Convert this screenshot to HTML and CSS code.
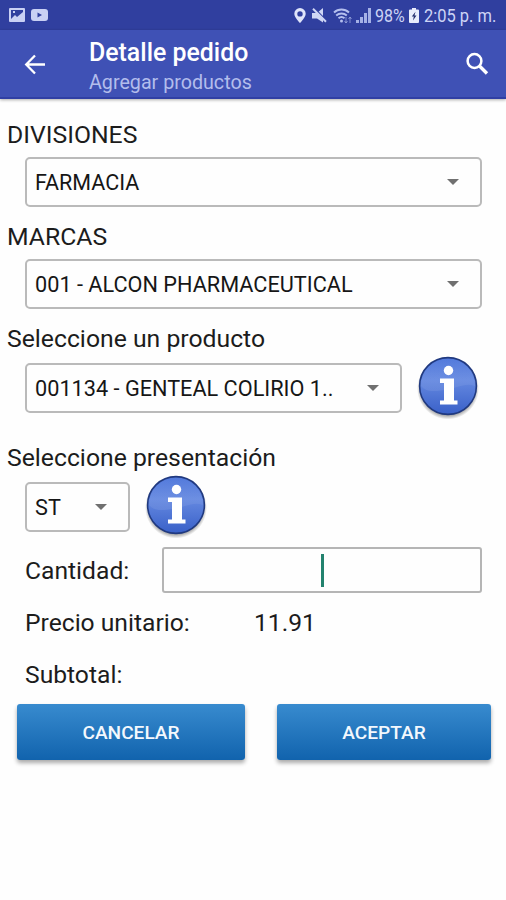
FILE: index.html
```html
<!DOCTYPE html>
<html lang="es">
<head>
<meta charset="utf-8">
<title>Detalle pedido</title>
<link rel="stylesheet" href="styles.css">
</head>
<body>
<svg class="defs" width="0" height="0" aria-hidden="true">
  <defs>
    <linearGradient id="ball" x1="0" y1="0" x2="0" y2="1">
      <stop offset="0" stop-color="#4f77db"/>
      <stop offset=".4" stop-color="#6488e0"/>
      <stop offset="1" stop-color="#3960c8"/>
    </linearGradient>
    <linearGradient id="gloss" x1="0" y1="0" x2="0" y2="1">
      <stop offset="0" stop-color="#fff" stop-opacity=".02"/>
      <stop offset="1" stop-color="#fff" stop-opacity=".08"/>
    </linearGradient>
    <radialGradient id="shade">
      <stop offset=".8" stop-color="#000" stop-opacity=".5"/>
      <stop offset="1" stop-color="#000" stop-opacity="0"/>
    </radialGradient>
    <symbol id="info" viewBox="0 0 64 64">
      <circle cx="32" cy="33.500" r="31" fill="url(#shade)"/>
      <circle cx="32" cy="31" r="28.400" fill="url(#ball)" stroke="#20397f" stroke-width="1.600"/>
      <path d="M5 31a27 27 0 0 1 54 0C49 27 39 34 29 35S11 38 5 31z" fill="url(#gloss)"/>
      <circle cx="32.500" cy="15.500" r="4.700" fill="#fff"/>
      <path d="M24 23.500H38V45.500h3.500V49.500H24v-4h4V28h-4z" fill="#fff"/>
    </symbol>
  </defs>
</svg>
<header>
  <div class="status">
    <svg width="16" height="14" viewBox="0 0 16 14"><path fill="#c9d0f4" fill-rule="evenodd" d="M1 0h14a1 1 0 0 1 1 1v12a1 1 0 0 1-1 1H1a1 1 0 0 1-1-1V1a1 1 0 0 1 1-1zM2 2v9l4-4 2 2 6-5V2zM4 3h2v2H4z"/></svg>
    <svg class="video" width="17" height="12" viewBox="0 0 17 12"><rect width="17" height="12" rx="3" fill="#c9d0f4"/><path d="M6.500 3.500v5l4.500-2.500z" fill="#303f9f"/></svg>
    <span class="gap"></span>
    <svg class="pin" width="12" height="15" viewBox="0 0 12 15"><path fill="#dfe4fa" fill-rule="evenodd" d="M6 0a5.700 5.700 0 0 1 5.700 5.700C11.700 9.500 6 15 6 15S.3 9.500.3 5.700A5.700 5.700 0 0 1 6 0zM6 3.200a2.700 2.700 0 1 0 0 5.400 2.700 2.700 0 0 0 0-5.400z"/></svg>
    <svg class="mute" width="15" height="15" viewBox="0 0 15 15"><path d="M0 5h5l6-5v14.500L5 10.500H0z" fill="#cfd6f5"/><path d="M2 0l13 13" stroke="#303f9f" stroke-width="1.500"/><path d="M1 .8l13 13" stroke="#cfd6f5" stroke-width="2"/></svg>
    <svg class="wifi" width="20" height="17" viewBox="0 0 20 17" fill="none" stroke="#b4bfee" stroke-width="1.900"><path d="M1 5.500a11 11 0 0 1 15 0M3.200 8.500a8 8 0 0 1 10.600 0M5.500 11.300a4.500 4.500 0 0 1 6 0"/><circle cx="8.500" cy="14" r="1.500" fill="#b4bfee" stroke="none"/><path d="M13 10v6M11.500 14l1.500 2 1.500-2M17 16v-6M15.500 12l1.500-2 1.500 2" stroke-width="1" opacity=".6"/></svg>
    <svg class="signal" width="15" height="15" viewBox="0 0 15 15" fill="#a5b1e6"><path d="M0 12h3v3H0zM4 9h3v6H4zM8 5h3v10H8zM12 0h3v15h-3z"/></svg>
    <span class="pct">98%</span>
    <svg class="battery" width="10" height="15" viewBox="0 0 10 15"><path d="M3 0h4v1.500h2a1 1 0 0 1 1 1V14a1 1 0 0 1-1 1H1a1 1 0 0 1-1-1V2.500a1 1 0 0 1 1-1h2z" fill="#e9ecfb"/><path d="M6.500 3.800L2.800 8.500h2L4 12.500l3.500-5h-2z" fill="#26306f"/></svg>
    <span class="clock">2:05 p. m.</span>
  </div>
  <div class="appbar">
    <svg class="back" width="22" height="22" viewBox="0 0 22 22" fill="none" stroke="#fff" stroke-width="2.300"><path d="M21 11.500H3M11 2.500L2.200 11.500l8.800 9"/></svg>
    <div class="titles"><h1>Detalle pedido</h1><p>Agregar productos</p></div>
    <svg class="search" width="24" height="24" viewBox="0 0 24 24" fill="none" stroke="#fff"><circle cx="9.500" cy="9" r="6.900" stroke-width="2.500"/><path d="M14.500 14l7.500 7.500" stroke-width="3.300"/></svg>
  </div>
</header>
<main>
  <h2>DIVISIONES</h2>
  <div class="select wide"><span class="value-short">FARMACIA</span><i class="caret"></i></div>
  <h2>MARCAS</h2>
  <div class="select wide"><span>001 - ALCON PHARMACEUTICAL</span><i class="caret"></i></div>
  <h2>Seleccione un producto</h2>
  <div class="row product">
    <div class="select"><span>001134 - GENTEAL COLIRIO 1..</span><i class="caret"></i></div>
    <svg class="info" width="64" height="66"><use href="#info" width="64" height="64"/></svg>
  </div>
  <h2 class="pres">Seleccione presentación</h2>
  <div class="row unit">
    <div class="select"><span>ST</span><i class="caret"></i></div>
    <svg class="info" width="64" height="66"><use href="#info" width="64" height="64"/></svg>
  </div>
  <div class="row qty"><span>Cantidad:</span><div class="input"><i class="cursor"></i></div></div>
  <div class="row line"><span class="name">Precio unitario:</span><span>11.91</span></div>
  <div class="row line"><span>Subtotal:</span></div>
  <div class="actions"><button>CANCELAR</button><button>ACEPTAR</button></div>
</main>
</body>
</html>
```
FILE: styles.css
```css
* { box-sizing: border-box; }
body { margin: 0; background: #fefefe; color: #1c1c1c; font-family: Roboto, sans-serif; height: 900px; overflow: hidden; }
.defs { display: block; }
svg { flex: none; display: block; }
h1, h2, p { margin: 0; font-weight: 400; }
span { white-space: nowrap; }

.status { height: 30px; background: #303f9f; display: flex; align-items: center; padding: 0 10px 0 9px; color: #cdd4f5; font-size: 18px; }
.video { margin-left: 6px; }
.gap { flex: 1; }
.mute { margin-left: 6px; }
.wifi { margin-left: 6px; }
.signal { margin-left: 3px; }
.pct { width: 30px; margin-left: 4px; transform: scaleX(.89); transform-origin: left; }
.battery { margin: 0 5px 0 4px; }
.clock { width: 72px; transform: scaleX(.915); transform-origin: left; }

.appbar { height: 69px; background: #3f51b5; border-bottom: 2px solid #303fa4; box-shadow: 0 1px 3px #0005; display: flex; align-items: center; padding: 0 17px 0 24px; color: #fff; }
.titles { flex: 1; margin-left: 43px; }
h1 { font-size: 24.900px; font-weight: 500; line-height: 30px; margin-top: 9px; }
.appbar p { font-size: 19.700px; line-height: 30px; color: #b3bdec; }

main { padding-top: 21px; }
h2 { font-size: 24.750px; line-height: 30px; padding-left: 7px; }
.select { height: 50px; border: 2px solid #bababa; border-radius: 5px; display: flex; align-items: center; justify-content: space-between; padding: 0 21px 0 8px; font-size: 21.700px; color: #161616; }
.value-short { font-size: 21.500px; }
.wide { margin: 7px 24px 15px 25px; }
.caret { width: 12px; height: 6px; background: #707070; clip-path: polygon(0 0, 100% 0, 50% 100%); }
.row { display: flex; align-items: center; padding-left: 25px; }
.product { height: 66px; margin-top: 1px; }
.product .select { width: 377px; }
.info { margin: 0 0 0 14px; }
.pres { margin-top: 22px; }
.unit { height: 66px; margin-top: 1px; }
.unit .select { width: 105px; }
.qty { height: 48px; margin-top: 6px; padding-right: 24px; justify-content: space-between; font-size: 24.650px; }
.input { width: 320px; height: 46px; border: 2px solid #b5b5b5; border-radius: 3px; display: flex; align-items: center; justify-content: center; }
.cursor { width: 3px; height: 33px; background: #23826e; }
.line { height: 52px; font-size: 24.650px; }
.qty + .line { margin-top: 2px; }
.name { width: 229px; }
.actions { display: grid; grid-template-columns: 228px 214px; gap: 32px; margin: 4px 0 0 17px; }
button { height: 56px; border: 0; border-radius: 3px; background: linear-gradient(#388bcf, #1163ad); box-shadow: 0 3px 4px #0005; color: #f3f8fd; font: 500 19.100px Roboto, sans-serif; padding: 0; }
```
